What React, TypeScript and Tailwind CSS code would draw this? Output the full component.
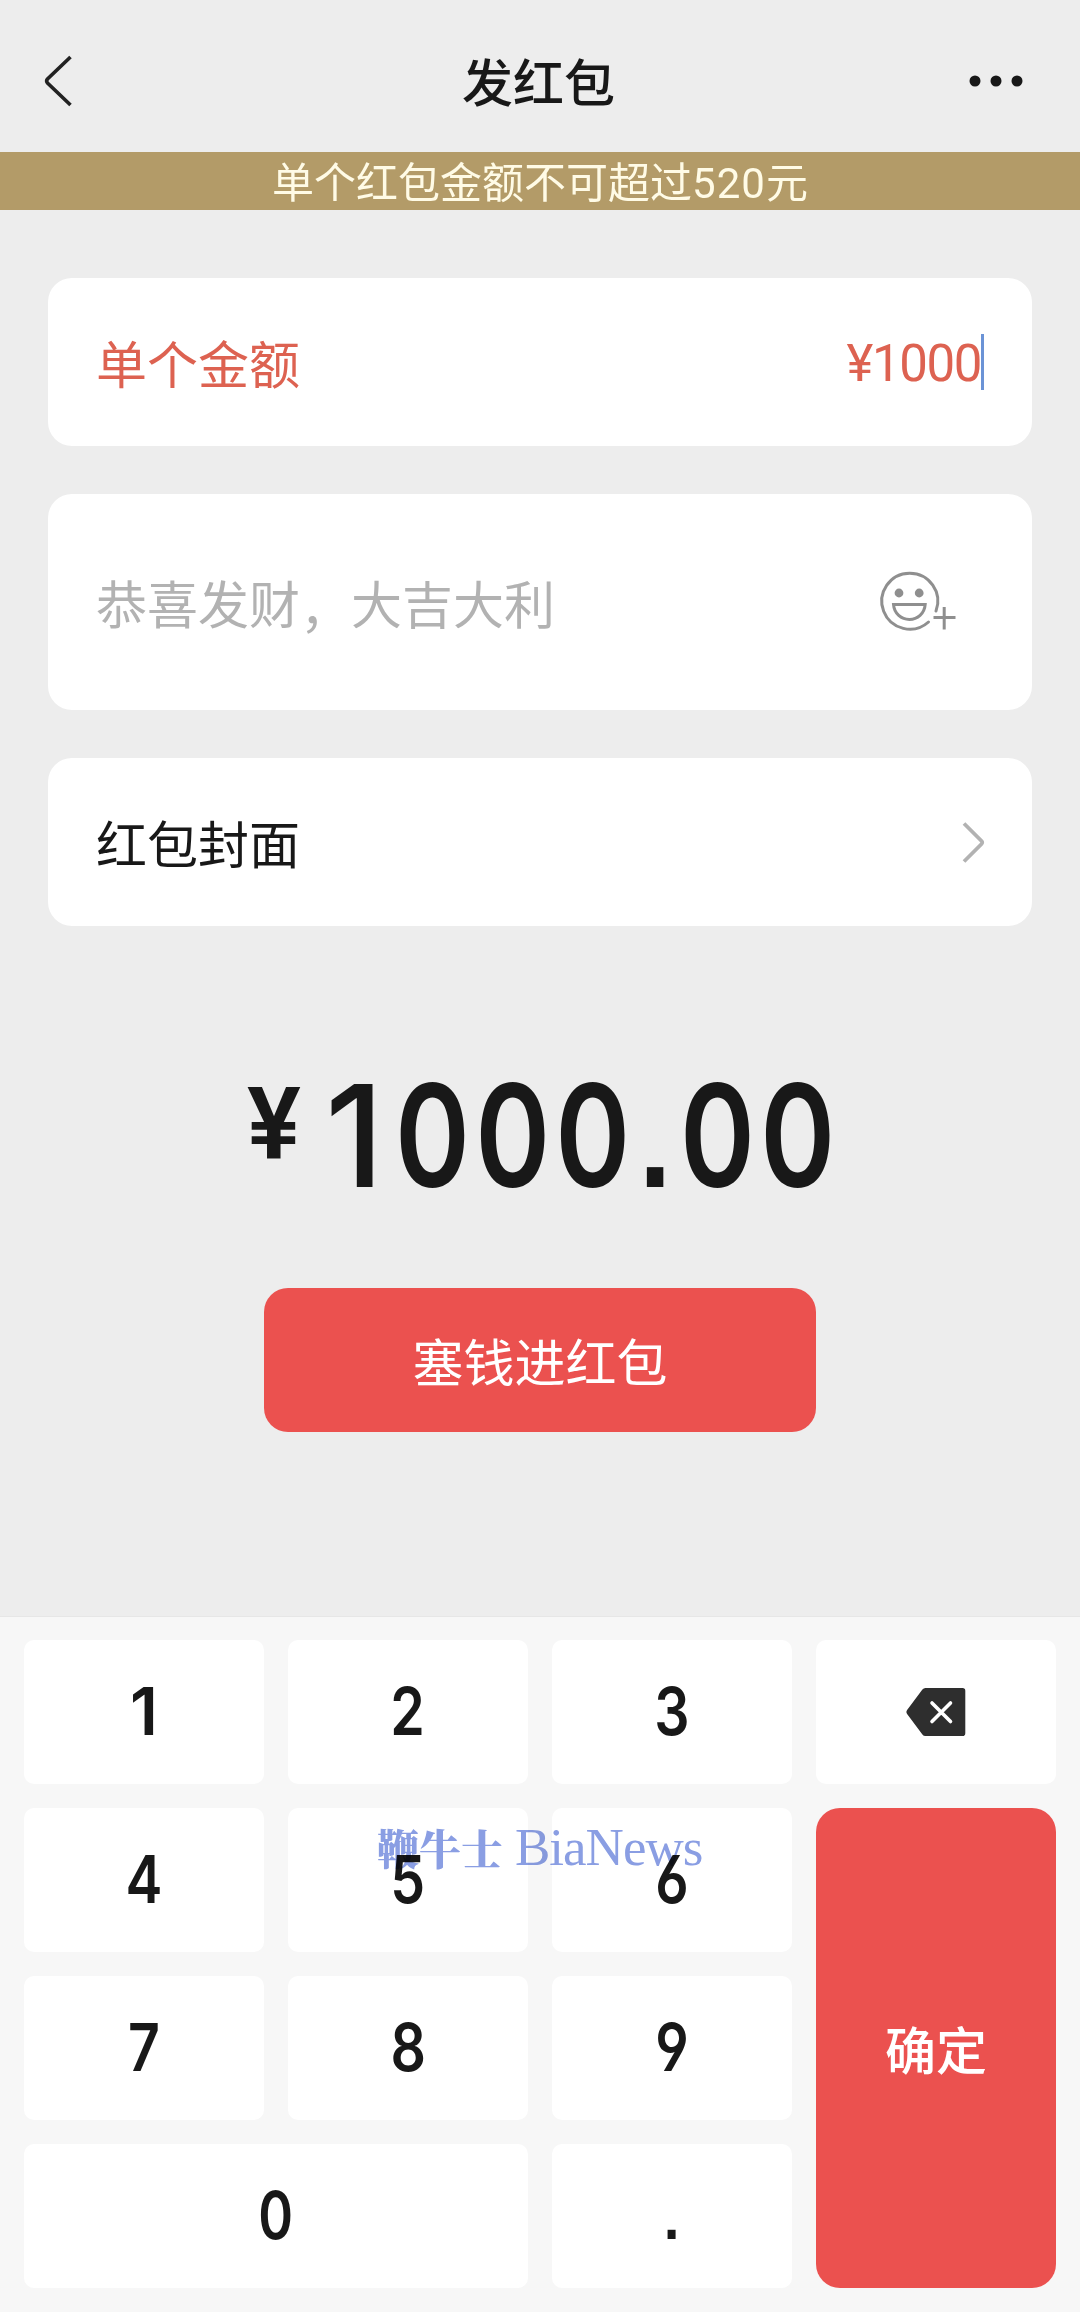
import type { ReactNode } from 'react';
import clsx from 'clsx';

const digits = ['1', '2', '3', '4', '5', '6', '7', '8', '9'];

const cardBase = 'mx-12 flex items-center justify-between rounded-3xl bg-white pl-12 pr-12';

function BackIcon() {
  return (
    <svg width="30" height="54" viewBox="0 0 30 54" fill="none" stroke="#222" strokeWidth="3.6">
      <path d="M27.5 3 4.5 25Q2.8 27 4.5 29L27.5 51" />
    </svg>
  );
}

function MoreIcon() {
  return (
    <svg width="54" height="12" viewBox="0 0 54 12" fill="#181818">
      <circle cx="6" cy="6" r="5.5" />
      <circle cx="27" cy="6" r="5.5" />
      <circle cx="48" cy="6" r="5.5" />
    </svg>
  );
}

function EmojiAddIcon() {
  return (
    <svg
      className="overflow-visible"
      width="78"
      height="58"
      viewBox="0 0 78 58"
      fill="none"
      stroke="#8f8f8f"
      strokeWidth="3"
    >
      <path d="M56 38A28 28 0 1 0 48.5 49" strokeLinecap="round" />
      <circle cx="19" cy="20" r="4.4" fill="#8f8f8f" stroke="none" />
      <circle cx="39.2" cy="20" r="4.4" fill="#8f8f8f" stroke="none" />
      <path d="M13.5 31.4H45.2C44.5 40.7 37.5 46.4 29.4 46.4S14.2 40.7 13.5 31.4Z" />
      <path d="M53.5 44.5H75.5M64.2 34V56.5" />
    </svg>
  );
}

function ChevronIcon() {
  return (
    <svg width="24" height="42" viewBox="0 0 24 42" fill="none" stroke="#b2b2b2" strokeWidth="3.8">
      <path d="M2 2.5 19.5 20Q20.8 21.5 19.5 23L2 40.5" />
    </svg>
  );
}

function BackspaceIcon() {
  return (
    <svg width="60" height="48" viewBox="0 0 60 48">
      <path
        d="M19.5 0H56.5Q59.3 0 59.3 2.8V45.2Q59.3 48 56.5 48H19.5Q17.5 48 16.4 46.4L1.1 26Q-.3 24 1.1 22L16.4 1.6Q17.5 0 19.5 0Z"
        fill="#2e2e2e"
      />
      <path d="M26 15 44.5 33.5M44.5 15 26 33.5" stroke="#fff" strokeWidth="3.6" strokeLinecap="round" />
    </svg>
  );
}

function Key({ children, wide }: Readonly<{ children: ReactNode; wide?: boolean }>) {
  return (
    <button
      className={clsx(
        "flex h-36 items-center justify-center rounded-[10px] bg-white font-['Inter',sans-serif] text-[66px] leading-none font-[560] text-[#181818] [font-feature-settings:'cv03','cv04','ss07']",
        wide && 'col-span-2',
      )}
    >
      {children}
    </button>
  );
}

function Digit({ value }: Readonly<{ value: string }>) {
  // the "1" keeps its full width, the others are condensed
  return (
    <span className={clsx('pb-[2px]', value === '1' ? 'scale-x-100' : value === '0' ? 'scale-x-[.8]' : 'scale-x-[.84]')}>
      {value}
    </span>
  );
}

export default function App() {
  return (
    <div className="flex h-[2312px] w-[1080px] flex-col overflow-hidden bg-[#ededed] font-['Roboto','Noto_Sans_CJK_SC',sans-serif] text-[#181818]">
      <header className="grid h-[152px] grid-cols-3 items-center px-[43px] pt-[9px]">
        <BackIcon />
        <h1 className="pt-2 pr-[3px] text-center text-[51px] leading-none font-medium">发红包</h1>
        <div className="mr-[14px] justify-self-end">
          <MoreIcon />
        </div>
      </header>

      <div className="flex h-[58px] items-center justify-center bg-[#b39b68] pt-[6px] text-[42px] leading-none text-[#fffbe6]">
        单个红包金额不可超过<span className="tracking-[1px]">520</span>元
      </div>

      <section className={`${cardBase} mt-[68px] h-[168px] text-[51px] leading-none text-[#dd6251]`}>
        <span className="pt-[8px]">单个金额</span>
        <span className="flex items-center">
          <span className="mt-[2px] tracking-[-1.4px]">¥1000</span>
          <span className="h-14 w-[3px] bg-[#6b93d6]" />
        </span>
      </section>

      <section className={`${cardBase} mt-12 h-[216px] text-[51px] leading-none text-[#b2b2b2]`}>
        <span className="pt-[8px]">
          恭喜发财<span className="relative top-[4px]">，</span>大吉大利
        </span>
        <span className="mr-[26px]">
          <EmojiAddIcon />
        </span>
      </section>

      <section className={`${cardBase} mt-12 h-[168px] text-[51px] leading-none`}>
        <span className="pt-[8px]">红包封面</span>
        <span className="-mr-[2px]">
          <ChevronIcon />
        </span>
      </section>

      <div className="mt-[134px] flex h-[150px] items-start pl-[247px] font-medium">
        <span className="mt-[13px] w-[78px] text-[101px] leading-none font-semibold">¥</span>
        <span className="mt-[4px] flex font-['Inter',sans-serif] text-[142px] leading-none">
          <span className="w-[70px]">1</span>
          <span className="origin-left scale-x-[.8] font-semibold tracking-[6.5px] whitespace-nowrap [font-feature-settings:'ss07']">
            000<span className="px-[2px]">.</span>00
          </span>
        </span>
      </div>

      <button className="mt-[78px] h-36 w-[552px] self-center rounded-3xl bg-[#eb514f] pt-[9px] text-[51px] leading-none text-white">
        塞钱进红包
      </button>

      <div className="relative mt-auto grid h-[696px] grid-cols-4 gap-6 border-t border-[#e6e6e6] bg-[#f7f7f7] px-6 pt-[23px] pb-6">
        <div className="col-span-3 grid grid-cols-3 gap-6">
          {digits.map(d => (
            <Key key={d}>
              <Digit value={d} />
            </Key>
          ))}
          <Key wide>
            <Digit value="0" />
          </Key>
          <Key>
            <Digit value="." />
          </Key>
        </div>
        <div className="flex flex-col gap-6">
          <Key>
            <BackspaceIcon />
          </Key>
          <button className="flex-1 rounded-3xl bg-[#eb514f] pt-[9px] text-[51px] leading-none font-medium text-white">
            确定
          </button>
        </div>

        <div className="absolute top-[204px] left-[377px] flex items-baseline whitespace-nowrap text-[#8a9ee3] mix-blend-multiply">
          <span className="font-['Noto_Serif_CJK_SC','Noto_Sans_CJK_SC',serif] text-[42px] leading-none font-black">鞭牛士</span>
          <span className="ml-3 font-['Liberation_Serif',serif] text-[53px] leading-none tracking-[-1px]">BiaNews</span>
        </div>
      </div>
    </div>
  );
}
